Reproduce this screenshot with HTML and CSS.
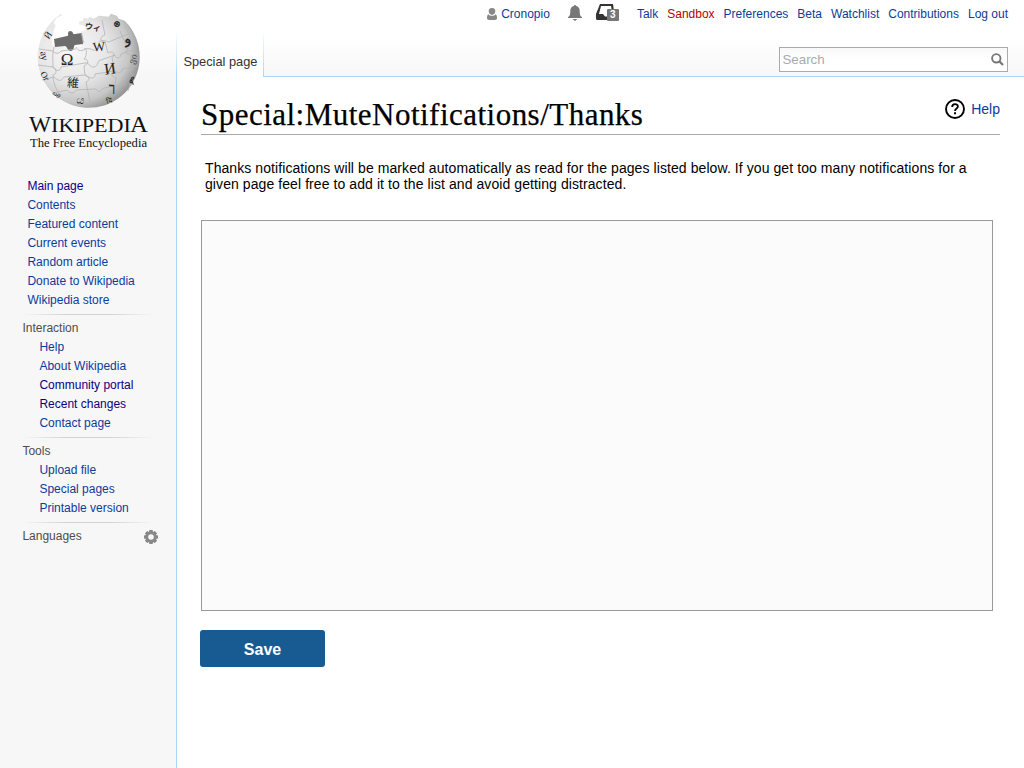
FILE: index.html
```html
<!DOCTYPE html>
<html lang="en">
<head>
<meta charset="utf-8">
<title>Special:MuteNotifications/Thanks</title>
<link rel="stylesheet" href="styles.css">
</head>
<body>
<div class="page">
  <aside class="sidebar">
    <svg class="logo" width="140" height="160" viewBox="0 0 140 160">
      <defs>
        <radialGradient id="globe" cx=".34" cy=".38" r=".7">
          <stop offset="0" stop-color="#f7f7f7"/><stop offset=".5" stop-color="#e6e6e6"/><stop offset=".8" stop-color="#c6c6c6"/><stop offset="1" stop-color="#8d8d8d"/>
        </radialGradient>
      </defs>
      <path fill="url(#globe)" transform="translate(-1.300 -1.300)" d="M44 16L38 19 35 24 37 27 35 32 33 39 34 47 63 48 62 33 67 31 66 27 61 26 60 23 64 22 65 19 69 20 71 18 75 20 80 17 90 18 92 15 98 17 100 20 106 22A51 51 0 1 1 42 15.500z"/>
      <path fill="#6d6d6d" d="M34 39l13-3c3 0-1-4 3-5 4 0 2 4 5 3l7-1 1 11-8 1c-2 1 0 5-4 6-4 0-3-4-6-5l-10 1z"/>
      <g fill="none" stroke="#b4b4b4" stroke-width=".8">
        <path d="M34 47c-2 9-1 14-1 20 4 2 4 7 0 8 0 8 3 14 8 22M56 47c2 5 7 4 9 2s2 8-1 10c5 0 5 5 0 7l1 9c5 1 5 6 1 7l4 20M61 33l3 10M82 20l3 15c-5 1-6 7 0 7l3 11c5-3 8 1 4 5l3 13c-5 2-4 6 1 6l-2 17M104 26c5 7 8 13 7 20M100 31l8 18c-4 3-2 6 2 5l3 15c-4 2-3 5 0 6l-5 16"/>
        <path d="M19 49l14 2c2 3 6 3 8 0l15-2M64 49c8-2 10 4 14 0 5-4-2-7 3-8 6-2 6 3 10 0l17-7M18 65l15 2c3 5 8 4 8 0l24-4c5-1 4 5 9 4s3-7 7-7l14-5c1 5 6 3 6-1l14-5M22 80l12-3c4 4 7 5 10 0l21-2c5 4 11 4 10-1l20-3c4 3 8 1 7-2l15-3M34 93l13-3c3 4 7 4 9 0l20-1 3 3 5-4 22-4"/>
      </g>
      <g class="logo-glyphs" text-anchor="middle">
        <text x="47" y="65" font-size="17">Ω</text>
        <text x="79" y="51" font-size="13" transform="rotate(-5 79 47)">W</text>
        <text x="90" y="74" font-size="16" transform="rotate(-8 90 69)">И</text>
        <text x="53" y="87" font-size="12" transform="rotate(5 53 83)">維</text>
        <text class="heavy" x="92" y="92" font-size="12">ך</text>
        <text class="heavy" x="73" y="30" font-size="8" transform="rotate(10 73 27)">ウィ</text>
        <text class="heavy" x="108" y="43" font-size="14" transform="rotate(-15 108 40)">و</text>
        <text x="24" y="59" font-size="10" transform="rotate(80 24 56)">ау</text>
        <text x="25" y="79" font-size="9" transform="rotate(60 25 76)">Or</text>
        <text x="29" y="38" font-size="9" transform="rotate(-55 29 36)">Й</text>
        <text class="heavy" x="97" y="27" font-size="9" transform="rotate(35 97 24)">⊕</text>
        <text x="113" y="62" font-size="9" transform="rotate(-70 113 59)" opacity=".65">ვი</text>
        <text class="heavy" x="112" y="83" font-size="8" transform="rotate(-60 112 80)">ም</text>
        <text x="61" y="104" font-size="11" transform="rotate(10 61 100)">ය</text>
        <text x="37" y="97" font-size="7" transform="rotate(40 37 94)">ωθ</text>
        <text x="89" y="103" font-size="7" transform="rotate(-15 89 101)">दि</text>
      </g>
      <g class="logo-name">
        <text x="9" y="132" font-size="24" textLength="22" lengthAdjust="spacingAndGlyphs">W</text>
        <text x="31" y="132" font-size="19" textLength="80" lengthAdjust="spacingAndGlyphs">IKIPEDI</text>
        <text x="110" y="132" font-size="24" textLength="18" lengthAdjust="spacingAndGlyphs">A</text>
        <text x="10" y="147" font-size="13" textLength="117" lengthAdjust="spacingAndGlyphs">The Free Encyclopedia</text>
      </g>
    </svg>
    <nav>
      <ul class="links links-main">
        <li><a class="visited">Main page</a></li><li><a>Contents</a></li><li><a>Featured content</a></li><li><a>Current events</a></li><li><a>Random article</a></li><li><a>Donate to Wikipedia</a></li><li><a>Wikipedia store</a></li>
      </ul>
      <section class="portal"><h3>Interaction</h3>
        <ul class="links"><li><a>Help</a></li><li><a>About Wikipedia</a></li><li><a class="visited">Community portal</a></li><li><a class="visited">Recent changes</a></li><li><a>Contact page</a></li></ul>
      </section>
      <section class="portal"><h3>Tools</h3>
        <ul class="links"><li><a>Upload file</a></li><li><a>Special pages</a></li><li><a>Printable version</a></li></ul>
      </section>
      <section class="portal languages"><h3>Languages</h3>
        <svg width="14" height="14" viewBox="-7 -7 14 14"><g fill="#888"><path id="tooth" d="M-1.6-7h3.2l.7 3h-4.6zM-1.6 7h3.2l.7-3h-4.6z"/><use href="#tooth" transform="rotate(45)"/><use href="#tooth" transform="rotate(90)"/><use href="#tooth" transform="rotate(135)"/></g><circle r="4" fill="none" stroke="#888" stroke-width="2.400"/></svg>
      </section>
    </nav>
  </aside>
  <div class="column">
    <header class="head">
      <div class="personal">
        <svg class="user" width="10" height="12" viewBox="0 0 10 12"><path fill="#888" d="M5 0a3.300 3.300 0 0 1 3.300 3.300c0 2-1.500 3.600-3.300 3.600S1.700 5.300 1.700 3.300A3.300 3.300 0 0 1 5 0zM1.400 6.300C3 8.300 7 8.300 8.600 6.300 9.800 7 10 8.500 10 10.300 10 11.500 9 12 8 12H2c-1 0-2-.5-2-1.700 0-1.800.2-3.300 1.400-4z"/></svg>
        <a class="name">Cronopio</a>
        <svg class="bell" width="14" height="16" viewBox="0 0 14 16"><path fill="#777" d="M7 0c.7 0 1 .5 1 1 2.500.5 3.700 2.400 3.700 4.700 0 4 .5 5.300 2.300 6.300v1H0v-1c1.800-1 2.300-2.300 2.300-6.300C2.300 3.400 3.500 1.500 6 1c0-.5.3-1 1-1zM4.500 14h5L7 16z"/></svg>
        <span class="tray"><svg width="24" height="18" viewBox="0 0 24 18"><path fill="#333" fill-rule="evenodd" d="M4 0h13l1 7h-2l-1-5H5L3 10h4l2 2.500h4V16H1.500Q0 16 0 14.500V10z"/></svg><span class="badge">3</span></span>
        <a>Talk</a><a class="new">Sandbox</a><a>Preferences</a><a>Beta</a><a>Watchlist</a><a>Contributions</a><a>Log out</a>
      </div>
      <div class="tabs">
        <span class="tab">Special page</span>
        <div class="search"><span>Search</span><svg width="13" height="13" viewBox="0 0 13 13" fill="none" stroke="#777"><circle cx="5.300" cy="5.300" r="4.200" stroke-width="1.900"/><path stroke-width="2.300" d="M8.300 8.300l3.700 3.700"/></svg></div>
      </div>
    </header>
    <main>
      <div class="title"><h1>Special:MuteNotifications/Thanks</h1>
        <a class="help"><svg width="20" height="20" viewBox="0 0 20 20" fill="none" stroke="#000"><circle cx="10" cy="10" r="9" stroke-width="1.900"/><path stroke-width="1.800" d="M7.200 8c0-3.700 5.700-3.600 5.700-.4C12.900 9.500 10 9.500 10 12"/><path stroke-width="2" d="M10 13.200v2"/></svg>Help</a>
      </div>
      <p>Thanks notifications will be marked automatically as read for the pages listed below. If you get too many notifications for a<br>given page feel free to add it to the list and avoid getting distracted.</p>
      <div class="editor"></div>
      <button>Save</button>
    </main>
  </div>
</div>
</body>
</html>
```
FILE: styles.css
```css
* { box-sizing: border-box; }
body { margin: 0; font: 12px/19px "Liberation Sans", Arial, sans-serif; color: #000; }
a { color: #0d3a9d; }
a.visited { color: #0b0080; }
a.new { color: #ba0000; }
ul, h1, h3, p { margin: 0; padding: 0; font-weight: normal; list-style: none; }
svg { display: block; flex: none; }
.page { display: grid; grid-template-columns: 176px 1fr; height: 768px; overflow: hidden; background: linear-gradient(#fff 38px, #f7f7f7 76px); }
.logo { margin-left: 20px; }
.logo-glyphs, .logo-name { font-family: "Liberation Serif", "DejaVu Serif", "Noto Sans CJK JP", serif; fill: #222; }
.heavy { stroke: #222; stroke-width: .3px; }
.logo-name { fill: #111; }
.sidebar nav { padding: 17px 18px 0 22.4px; }
.links { padding-left: 17px; }
.links-main { padding-left: 5px; }
.portal { margin-top: 4px; padding-top: 5px; background: linear-gradient(90deg, #f7f7f7, #d2d2d2 33%, #d2d2d2 66%, #f7f7f7) 0 0 / 132px 1px no-repeat; }
.portal h3 { font-size: 12px; color: #4d4d4d; }
.languages { display: flex; justify-content: space-between; align-items: center; }
.column { display: flex; flex-direction: column; min-width: 0; }
.head { height: 77px; display: flex; flex-direction: column; justify-content: space-between; }
.personal { display: flex; justify-content: flex-end; align-items: center; gap: 9px; height: 28px; padding-right: 16px; }
.personal .name { margin-left: -5px; margin-right: 9px; }
.bell { margin-right: 5px; margin-top: -3px; }
.tray { position: relative; margin: -3px 8px 0 0; }
.badge { position: absolute; left: 11px; top: 5px; width: 12px; height: 12px; background: #777; color: #fff; font: bold 10px/12px "Liberation Sans", sans-serif; text-align: center; border-radius: 1px; }
.tabs { display: flex; height: 47px; background: linear-gradient(#a7d7f9, #a7d7f9) 88px 100% / 100% 1px no-repeat; }
.tab { flex: none; width: 88px; height: 47px; padding: 22px 0 0 7.4px; font-size: 12.8px; color: #333; background: linear-gradient(#fff, #a7d7f9) 0 0 / 1px 100% no-repeat, linear-gradient(#fff, #a7d7f9) 100% 0 / 1px 100% no-repeat, #fff; }
.search { flex: none; width: 229px; height: 25px; margin: 17px 16px 0 auto; border: 1px solid #aaa; background: linear-gradient(#f8f8f8, #fff 50%); display: flex; align-items: center; justify-content: space-between; padding: 0 3px 0 2.5px; font-size: 13.3px; color: #aaa; }
main { flex: 1; background: #fff; border-left: 1px solid #a7d7f9; padding: 19px 24px 0; }
.title { display: flex; justify-content: space-between; border-bottom: 1px solid #aaa; height: 39px; }
h1 { font: 31px/37px "Liberation Serif", serif; letter-spacing: .48px; white-space: nowrap; -webkit-text-stroke: .25px #000; }
.help { display: flex; gap: 6px; height: 20px; margin-top: 3px; align-items: center; font-size: 14px; }
p { padding: 25px 0 0 4px; font-size: 14px; line-height: 16px; letter-spacing: .08px; white-space: nowrap; }
.editor { width: 792px; height: 391px; margin-top: 28px; border: 1px solid #999; background: #fbfbfb; }
button { display: block; width: 125px; height: 37px; margin: 19px 0 0 -1px; padding: 2px 0 0; border: 0; border-radius: 3px; background: #175b92; color: #fff; font: bold 16px "Liberation Sans", sans-serif; }
```
